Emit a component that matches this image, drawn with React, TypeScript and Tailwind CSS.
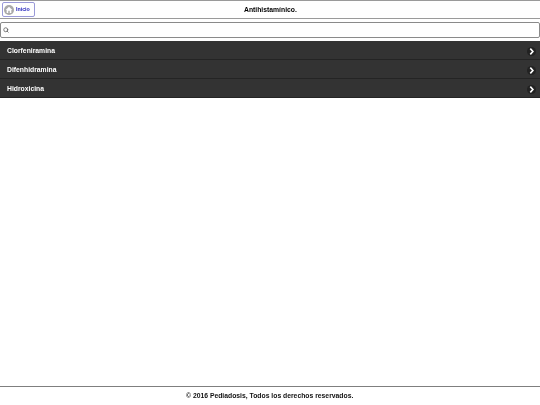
import { Search } from 'lucide-react';

const items = ['Clorfeniramina', 'Difenhidramina', 'Hidroxicina'];

function HomeBadge() {
    return (
        <svg viewBox="0 0 12 12" className="h-[10px] w-[10px]">
            <circle cx="6" cy="6" r="6" fill="#a9a9a9" />
            <path d="M6 2.2 L10 6 H8.8 V9.6 H6.9 V7 H5.1 V9.6 H3.2 V6 H2 Z" fill="#fff" />
        </svg>
    );
}

function Chevron() {
    return (
        <span className="flex h-[9px] w-[9px] items-center justify-center rounded-full bg-[#222]">
            <svg viewBox="0 0 9 9" className="h-[9px] w-[9px]">
                <path d="M3.3 1.6 L5.9 4.5 L3.3 7.4" fill="none" stroke="#fff" strokeWidth="1.6" />
            </svg>
        </span>
    );
}

export default function App() {
    return (
        <div className="flex h-[405px] flex-col bg-white font-['Liberation_Sans',Arial,sans-serif]">
            <header className="relative flex h-[19px] items-center justify-center border-y border-[#9a9a9a] bg-white pt-[1px]">
                <a className="absolute left-[2px] top-[1px] flex h-[15px] w-[33px] items-center gap-[2px] rounded-[2px] border border-[#9a9ad8] bg-white pl-[1px]">
                    <HomeBadge />
                    <span className="text-[5.3px] font-bold text-[#2222bb] will-change-transform">Inicio</span>
                </a>
                <h1 className="text-[6.8px] font-bold text-black will-change-transform">Antihistamínico.</h1>
            </header>

            <div className="mt-[3px]">
                <div className="flex h-[16px] items-center rounded-[2px] border border-[#8a8a8a] bg-white pl-[2px]">
                    <Search className="h-[6px] w-[6px] text-[#555]" strokeWidth={3} />
                </div>
            </div>

            <ul className="mt-[3px]">
                {items.map((item) => (
                    <li
                        key={item}
                        className="flex h-[19px] items-center justify-between border-b border-[#242424] bg-[#333333] pl-[7px] pr-[4px] pt-[2px] text-[6.8px] font-bold text-white"
                    >
                        <span className="will-change-transform">{item}</span>
                        <Chevron />
                    </li>
                ))}
            </ul>

            <div className="flex-1" />

            <footer className="flex h-[19px] items-center justify-center border-t border-[#7f7f7f] pt-[1px] text-[6.8px] font-bold text-[#111]">
                <span className="will-change-transform">© 2016 Pediadosis, Todos los derechos reservados.</span>
            </footer>
        </div>
    );
}
